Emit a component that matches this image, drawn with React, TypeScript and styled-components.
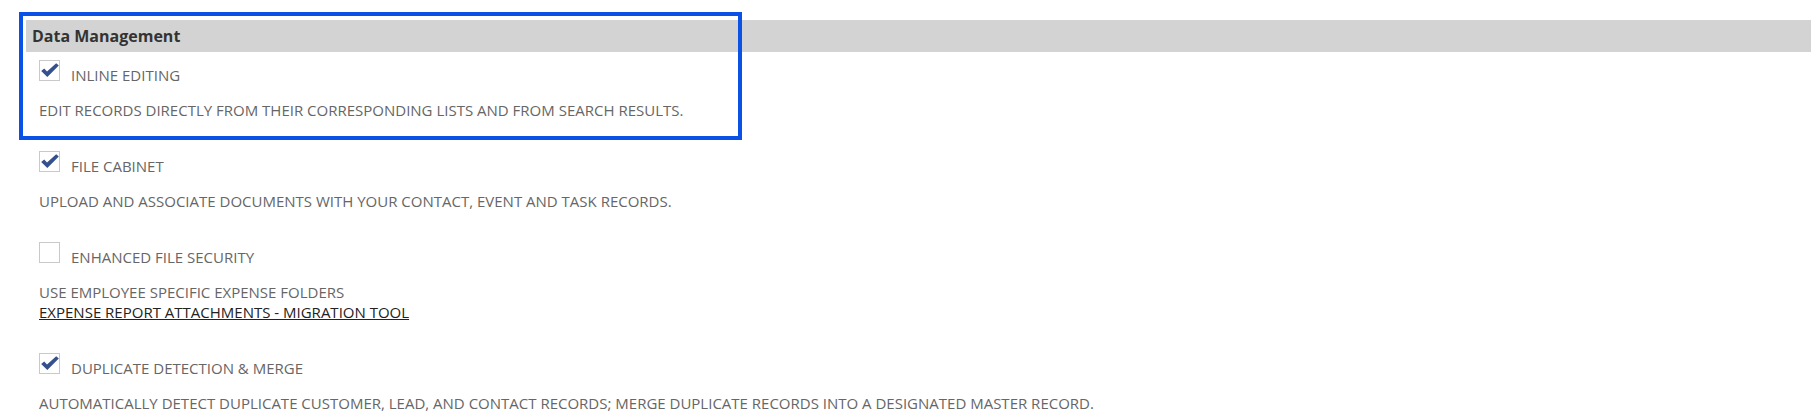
import styled, { createGlobalStyle } from "styled-components";

interface Feature {
  label: string;
  checked: boolean;
  lines: string[];
  link?: string;
}

const features: Feature[] = [
  {
    label: "INLINE EDITING",
    checked: true,
    lines: ["EDIT RECORDS DIRECTLY FROM THEIR CORRESPONDING LISTS AND FROM SEARCH RESULTS."],
  },
  {
    label: "FILE CABINET",
    checked: true,
    lines: ["UPLOAD AND ASSOCIATE DOCUMENTS WITH YOUR CONTACT, EVENT AND TASK RECORDS."],
  },
  {
    label: "ENHANCED FILE SECURITY",
    checked: false,
    lines: ["USE EMPLOYEE SPECIFIC EXPENSE FOLDERS"],
    link: "EXPENSE REPORT ATTACHMENTS - MIGRATION TOOL",
  },
  {
    label: "DUPLICATE DETECTION & MERGE",
    checked: true,
    lines: [
      "AUTOMATICALLY DETECT DUPLICATE CUSTOMER, LEAD, AND CONTACT RECORDS; MERGE DUPLICATE RECORDS INTO A DESIGNATED MASTER RECORD.",
    ],
  },
];

const GlobalStyle = createGlobalStyle`
  body {
    margin: 0;
    background: #fff;
    font-family: "Open Sans", "Liberation Sans", sans-serif;
  }
`;

const Page = styled.div`
  position: relative;
  padding: 20px 6px 0 26px;
`;

const SectionHeader = styled.div`
  height: 32px;
  display: flex;
  align-items: center;
  padding-left: 6px;
  background: #d3d3d3;
  color: #333;
  font-size: 16px;
  font-weight: 700;
`;

const List = styled.div`
  display: flex;
  flex-direction: column;
  gap: 31px;
  padding: 8px 0 0 13px;
`;

const Item = styled.div`
  display: flex;
  flex-direction: column;
  gap: 19px;
`;

const OptionRow = styled.label`
  display: flex;
  align-items: flex-start;
  gap: 11px;
  height: 21px;
`;

const Box = styled.span`
  flex: none;
  width: 21px;
  height: 21px;
  box-sizing: border-box;
  border: 1px solid #c9c9c9;
  background: #fff;
  display: flex;
`;

const Label = styled.span`
  margin-top: 5px;
  font-size: 15px;
  line-height: 20px;
  color: #666;
  white-space: nowrap;
`;

const Description = styled.div`
  font-size: 15px;
  line-height: 20px;
  color: #666;
  white-space: nowrap;
`;

const ToolLink = styled.a`
  display: block;
  color: #222;
  text-decoration: underline;
  cursor: pointer;
`;

const Highlight = styled.div`
  position: absolute;
  left: 19px;
  top: 12px;
  width: 723px;
  height: 128px;
  box-sizing: border-box;
  border: 4px solid #0b51e6;
  pointer-events: none;
`;

const Check = () => (
  <svg width="19" height="19" viewBox="0 0 19 19">
    <path d="M1.2 10 L4.2 7.4 L7 10.4 L16.2 2.2 L18.8 4.6 L7.3 16 Z" fill="#34508e" />
  </svg>
);

const App = () => {
  return (
    <Page>
      <GlobalStyle />
      <SectionHeader>Data Management</SectionHeader>
      <List>
        {features.map((f) => (
          <Item key={f.label}>
            <OptionRow>
              <Box>{f.checked && <Check />}</Box>
              <Label>{f.label}</Label>
            </OptionRow>
            <Description>
              {f.lines.map((l) => (
                <div key={l}>{l}</div>
              ))}
              {f.link && <ToolLink>{f.link}</ToolLink>}
            </Description>
          </Item>
        ))}
      </List>
      <Highlight />
    </Page>
  );
};

export default App;
